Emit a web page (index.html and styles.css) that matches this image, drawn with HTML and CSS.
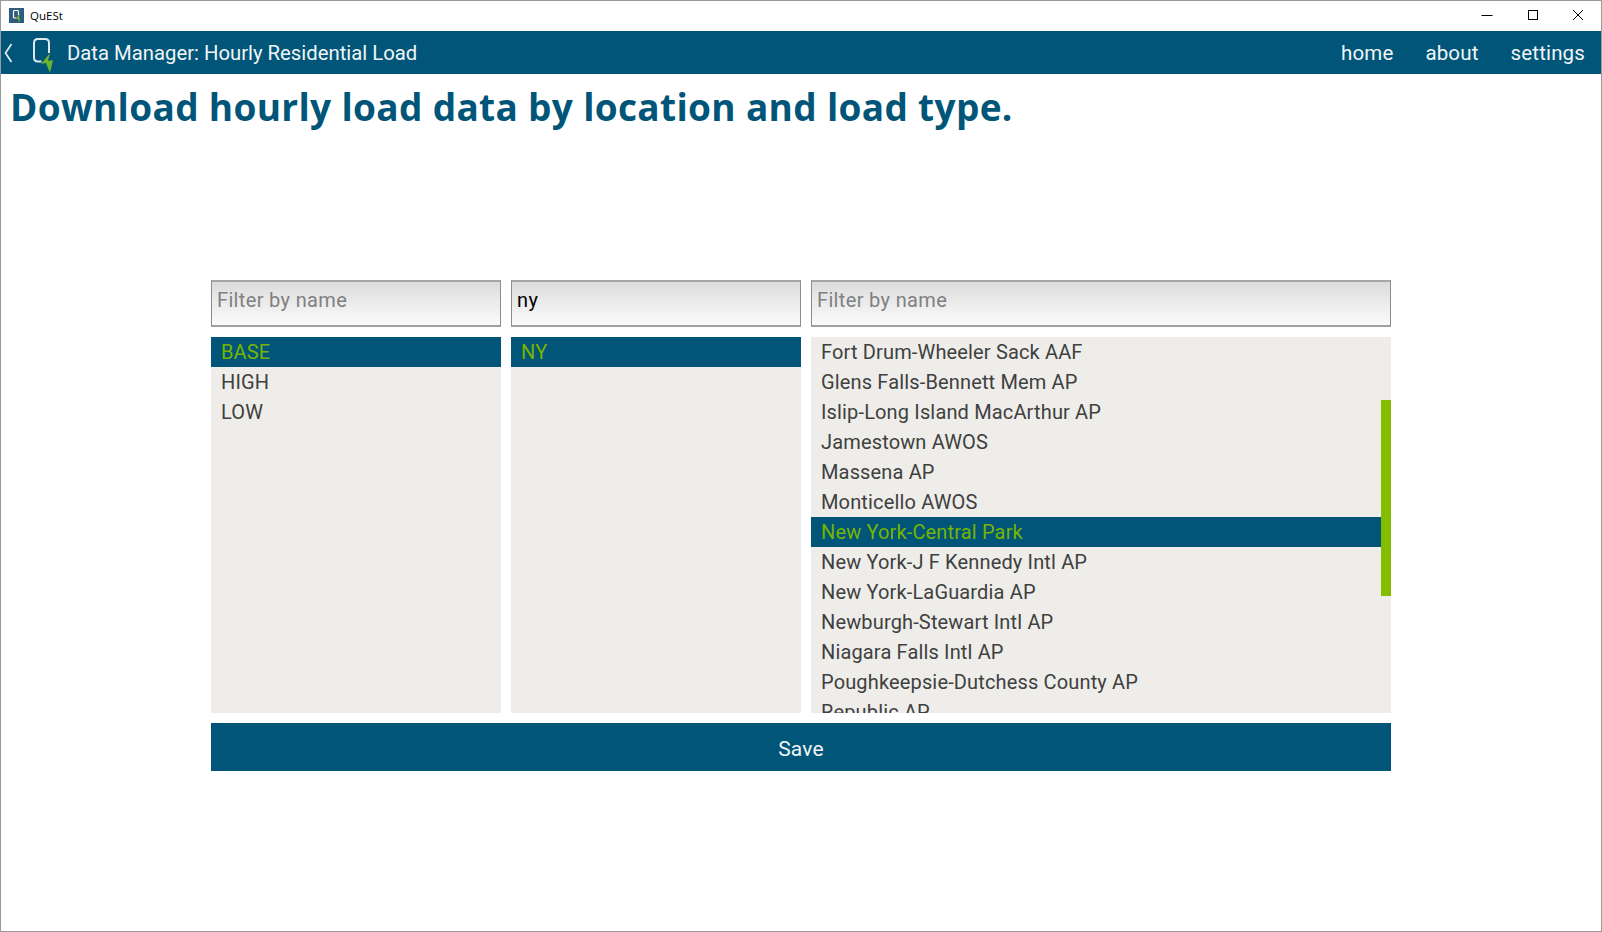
FILE: index.html
```html
<!DOCTYPE html>
<html lang="en">
<head>
    <meta charset="UTF-8">
    <meta name="viewport" content="width=device-width, initial-scale=1.0">
    <title>QuESt</title>
    <link rel="stylesheet" href="styles.css">
</head>
<body>
    <div class="window">
        <div class="titlebar">
            <svg class="app-icon" viewBox="0 0 15 15" aria-hidden="true">
                <rect width="15" height="15" fill="#2f5b7c"/>
                <path d="M7.500 10 H5.500 Q4.500 10 4.500 9 V3.500 Q4.500 2.500 5.500 2.500 H8.500 Q9.500 2.500 9.500 3.500 V7" fill="none" stroke="#fff" stroke-width="1.200"/>
                <path d="M9.500 7 L7.500 11 L9 11 L10.200 14 L11 10.500 L9.800 10.500 L10.500 7 Z" fill="#7fc31c"/>
            </svg>
            <span class="app-name">QuESt</span>
            <div class="win-buttons">
                <svg class="win-btn" viewBox="0 0 12 12" aria-hidden="true"><path d="M0.500 6.500 H11.500" stroke="#000" fill="none"/></svg>
                <svg class="win-btn" viewBox="0 0 12 12" aria-hidden="true"><rect x="1.500" y="1.500" width="9" height="9" stroke="#000" fill="none"/></svg>
                <svg class="win-btn" viewBox="0 0 12 12" aria-hidden="true"><path d="M1 1 L11 11 M11 1 L1 11" stroke="#000" fill="none"/></svg>
            </div>
        </div>
        <nav class="navbar">
            <svg class="back" viewBox="0 0 9 20" aria-hidden="true"><path d="M7.500 1 L1.500 10 L7.500 19" fill="none" stroke="#dfe9ef" stroke-width="1.800"/></svg>
            <svg class="logo" viewBox="0 0 24 38" aria-hidden="true">
                <path d="M9.500 25.500 H6 Q2 25.500 2 21.500 V7 Q2 3 6 3 H13 Q17 3 17 7 V17" fill="none" stroke="#dfe9ef" stroke-width="2"/>
                <path d="M18 17 L9 28 L14 27 L18 37 L21 24 L16 25 Z" fill="#6cb52d"/>
            </svg>
            <span class="nav-title">Data Manager: Hourly Residential Load</span>
            <div class="nav-links">
                <a>home</a>
                <a>about</a>
                <a>settings</a>
            </div>
        </nav>
        <h1 class="heading">Download hourly load data by location and load type.</h1>
        <main class="manager">
            <div class="filters">
                <div class="filter placeholder">Filter by name</div>
                <div class="filter">ny</div>
                <div class="filter placeholder">Filter by name</div>
            </div>
            <div class="lists">
                <div class="list">
                    <div class="row selected">BASE</div>
                    <div class="row">HIGH</div>
                    <div class="row">LOW</div>
                </div>
                <div class="list">
                    <div class="row selected">NY</div>
                </div>
                <div class="list">
                    <div class="rows">
                        <div class="row">Fort Drum-Wheeler Sack AAF</div>
                        <div class="row">Glens Falls-Bennett Mem AP</div>
                        <div class="row">Islip-Long Island MacArthur AP</div>
                        <div class="row">Jamestown AWOS</div>
                        <div class="row">Massena AP</div>
                        <div class="row">Monticello AWOS</div>
                        <div class="row selected">New York-Central Park</div>
                        <div class="row">New York-J F Kennedy Intl AP</div>
                        <div class="row">New York-LaGuardia AP</div>
                        <div class="row">Newburgh-Stewart Intl AP</div>
                        <div class="row">Niagara Falls Intl AP</div>
                        <div class="row">Poughkeepsie-Dutchess County AP</div>
                        <div class="row">Republic AP</div>
                    </div>
                    <div class="scrollbar"><div class="thumb"></div></div>
                </div>
            </div>
            <button class="save" type="button">Save</button>
        </main>
    </div>
</body>
</html>
```

FILE: styles.css
```css
html, body {
    margin: 0;
    padding: 0;
    height: 100%;
    background: #fff;
}
body {
    font-family: 'Roboto', sans-serif;
    overflow: hidden;
}
.window {
    box-sizing: border-box;
    height: 932px;
    border: 1px solid #9a9a9a;
    background: #fff;
}
.titlebar {
    box-sizing: border-box;
    display: flex;
    align-items: center;
    height: 30px;
    padding: 0 0 2px 8px;
}
.app-icon {
    width: 15px;
    height: 15px;
}
.app-name {
    margin-left: 6px;
    font-family: 'Open Sans', sans-serif;
    font-size: 11.5px;
    color: #000;
}
.win-buttons {
    display: flex;
    margin-left: auto;
    margin-right: 17px;
    gap: 33.5px;
}
.win-btn {
    width: 12px;
    height: 12px;
}
.navbar {
    display: flex;
    align-items: center;
    height: 43px;
    background: #005578;
    color: #f1f5f7;
}
.back {
    width: 9px;
    height: 20px;
    margin-left: 3px;
}
.logo {
    width: 24px;
    height: 38px;
    margin-left: 19px;
    margin-top: 5px;
    overflow: visible;
}
.nav-title {
    margin-left: 11px;
    font-size: 20.3px;
}
.nav-links {
    display: flex;
    gap: 32px;
    margin-left: auto;
    margin-right: 16px;
    font-size: 20.5px;
    letter-spacing: 0.15px;
}
.heading {
    margin: 0;
    padding: 10px 0 0 9px;
    height: 48px;
    font-family: 'Open Sans', sans-serif;
    font-size: 37px;
    line-height: 46px;
    font-weight: 700;
    letter-spacing: 0.33px;
    color: #005578;
}
.manager {
    width: 1180px;
    margin: 148px 0 0 210px;
}
.filters, .lists {
    display: grid;
    grid-template-columns: 290px 290px 580px;
    gap: 10px;
}
.filter {
    box-sizing: border-box;
    height: 47px;
    padding: 4px 5px 0;
    border: solid #8c8c8c;
    border-width: 2px 1px;
    border-top-color: #a5a5a5;
    border-bottom-color: #a0a0a0;
    background: linear-gradient(#dcdcdc, #fbfbfb);
    font-size: 20px;
    line-height: 28px;
    letter-spacing: 0.35px;
    color: #000;
}
.placeholder {
    color: #808080;
}
.lists {
    margin-top: 10px;
    height: 376px;
}
.list {
    display: flex;
    flex-direction: column;
    background: #eeede9;
    overflow: hidden;
}
.list:last-child {
    flex-direction: row;
}
.rows {
    flex: 1;
    overflow: hidden;
}
.row {
    flex: none;
    height: 30px;
    padding-left: 10px;
    font-size: 20px;
    line-height: 30px;
    letter-spacing: 0.15px;
    color: #404040;
}
.row.selected {
    background: #005578;
    color: #78b400;
}
.scrollbar {
    width: 10px;
}
.thumb {
    height: 196px;
    margin-top: 63px;
    background: #84bd00;
}
.save {
    display: block;
    width: 100%;
    height: 48px;
    margin-top: 10px;
    padding: 3px 0 0;
    border: none;
    background: #005578;
    color: #f1f5f7;
    font-family: inherit;
    font-size: 21px;
    letter-spacing: 0.2px;
}
```
